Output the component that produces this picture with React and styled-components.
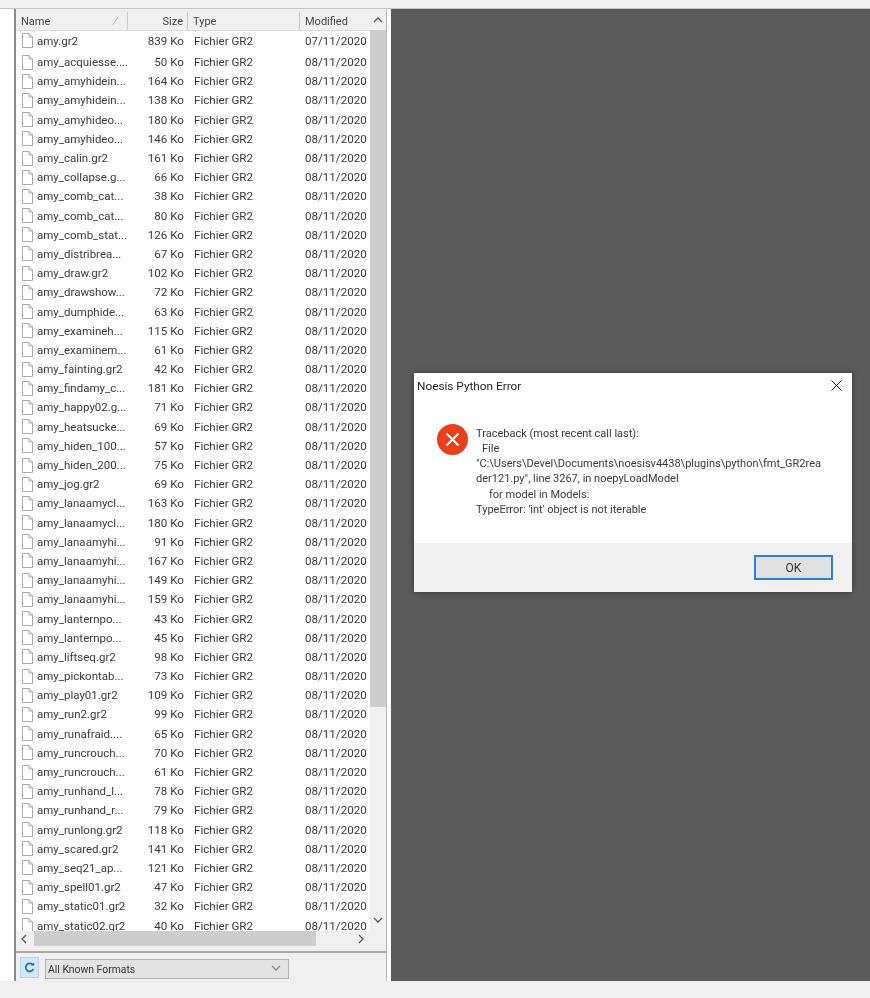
import React from 'react'
import styled, { createGlobalStyle } from 'styled-components'

const Global = createGlobalStyle`
  html, body { margin: 0; padding: 0; background: #f0f0f0; }
  body { font-family: Roboto, "Open Sans", "Liberation Sans", sans-serif; font-size: 12px; color: #3a3a3a; }
`

const Screen = styled.div`
  position: relative;
  width: 870px;
  height: 998px;
  overflow: hidden;
  display: flex;
  flex-direction: column;
  background: #f0f0f0;
  filter: blur(0.3px);
`
const TopStrip = styled.div`
  height: 8px;
  flex: none;
  background: #f0f0f0;
  border-bottom: 1px solid #c4c4c4;
`
const Middle = styled.div`
  height: 972px;
  flex: none;
  display: flex;
  background: #fff;
`
const BottomStrip = styled.div`
  flex: 1;
  background: #f0f0f0;
`
const Gutter = styled.div`
  width: 14px;
  flex: none;
  background: #fff;
`
const BrowserPanel = styled.div`
  width: 370px;
  height: 969px;
  flex: none;
  display: flex;
  flex-direction: column;
  padding-top: 3px;
  background: #f0f0f0;
  border-left: 2px solid #8a8a8a;
  border-right: 1px solid #b8b8b8;
`
const Desktop = styled.div`
  flex: 1;
  margin-left: 4px;
  background: #5b5b5b;
`
const ListArea = styled.div`
  height: 934px;
  flex: none;
  display: grid;
  grid-template-columns: 1fr 16px;
  grid-template-rows: 919px 15px;
`
const ListColumn = styled.div`
  display: flex;
  flex-direction: column;
  overflow: hidden;
  background: #fff;
  min-width: 0;
`
const Header = styled.div`
  height: 18px;
  flex: none;
  display: grid;
  grid-template-columns: 112px 60px 112px 1fr;
  background: #f0f0f0;
  border-bottom: 1px solid #dcdcdc;
  font-size: 11px;
`
const HeaderCell = styled.div`
  position: relative;
  display: flex;
  align-items: center;
  justify-content: ${p => (p.$right ? 'flex-end' : 'flex-start')};
  padding: ${p => p.$pad};
  padding-top: 2px;
  border-right: ${p => (p.$last ? 'none' : '1px solid #c9c9c9')};
  color: #444;
  line-height: 16px;
`
const SortMark = styled.svg`
  position: absolute;
  right: 7px;
  top: 4px;
`
const Rows = styled.div`
  flex: 1;
  overflow: hidden;
`
const Row = styled.div`
  height: ${p => (p.$first ? '21.5px' : '19.2px')};
  padding-bottom: ${p => (p.$first ? '2px' : '0')};
  box-sizing: border-box;
  display: grid;
  grid-template-columns: 112px 60px 112px 1fr;
  align-items: center;
  white-space: nowrap;
  line-height: 16px;
  font-size: 11.6px;
`
const NameCell = styled.div`
  display: flex;
  align-items: center;
  gap: 4px;
  padding-left: 5px;
  font-size: 11.5px;
`
const SizeCell = styled.div`
  text-align: right;
  padding-right: 4px;
`
const TypeCell = styled.div`
  padding-left: 6px;
`
const DateCell = styled.div`
  padding-left: 5px;
`
const VScroll = styled.div`
  display: flex;
  flex-direction: column;
  background: #f0f0f0;
`
const VThumb = styled.div`
  height: 677px;
  flex: none;
  background: #cdcdcd;
`
const ArrowBox = styled.div`
  height: ${p => p.$h || 18}px;
  width: ${p => p.$w || 16}px;
  flex: none;
  display: flex;
  align-items: center;
  justify-content: center;
`
const VTrack = styled.div`
  flex: 1;
`
const HScroll = styled.div`
  display: flex;
  background: #f0f0f0;
`
const HThumb = styled.div`
  width: 282px;
  flex: none;
  background: #cdcdcd;
`
const Corner = styled.div`
  background: #f0f0f0;
`
const Divider = styled.div`
  height: 2px;
  flex: none;
  background: #a8a8a8;
  margin-top: 5px;
`
const Toolbar = styled.div`
  flex: 1;
  display: flex;
  align-items: flex-start;
  gap: 6px;
  padding: 4px 0 0 4px;
`
const RefreshButton = styled.div`
  width: 17px;
  height: 19px;
  display: flex;
  align-items: center;
  justify-content: center;
  background: #d5e7f6;
  border: 1px solid #b9d2e6;
`
const FormatSelect = styled.div`
  width: 233px;
  height: 18px;
  margin-top: 2px;
  display: flex;
  align-items: center;
  justify-content: space-between;
  padding: 0 7px 0 2px;
  background: #e3e3e3;
  border: 1px solid #b4b4b4;
  font-size: 10.4px;
  color: #333;
`
const Dialog = styled.div`
  position: absolute;
  left: 414px;
  top: 373px;
  width: 438px;
  height: 219px;
  display: flex;
  flex-direction: column;
  background: #fff;
  box-shadow: 0 0 6px rgba(0, 0, 0, 0.45);
`
const TitleBar = styled.div`
  height: 25px;
  flex: none;
  display: flex;
  align-items: center;
  justify-content: space-between;
  padding: 0 10px 0 3px;
  color: #222;
  font-size: 11.8px;
`
const Body = styled.div`
  flex: 1;
  display: flex;
  gap: 8px;
  padding: 26px 0 0 23px;
`
const MessageText = styled.div`
  width: 350px;
  padding-top: 1.5px;
  font-size: 11px;
`
const MessageLine = styled.div`
  line-height: 15.3px;
  padding-left: ${p => p.$indent || 0}px;
  white-space: pre;
`
const Footer = styled.div`
  height: 49px;
  flex: none;
  display: flex;
  justify-content: flex-end;
  padding: 12px 19px 0 0;
  box-sizing: border-box;
  background: #f0f0f0;
`
const OkButton = styled.div`
  width: 75px;
  height: 21px;
  display: flex;
  align-items: center;
  justify-content: center;
  background: #e1e1e1;
  border: 2px solid #2f80c8;
  color: #333;
`

const files = [
  ['amy.gr2', '839 Ko', '07/11/2020'],
  ['amy_acquiesse....', '50 Ko'],
  ['amy_amyhidein...', '164 Ko'],
  ['amy_amyhidein...', '138 Ko'],
  ['amy_amyhideo...', '180 Ko'],
  ['amy_amyhideo...', '146 Ko'],
  ['amy_calin.gr2', '161 Ko'],
  ['amy_collapse.g...', '66 Ko'],
  ['amy_comb_cat...', '38 Ko'],
  ['amy_comb_cat...', '80 Ko'],
  ['amy_comb_stat...', '126 Ko'],
  ['amy_distribrea...', '67 Ko'],
  ['amy_draw.gr2', '102 Ko'],
  ['amy_drawshow...', '72 Ko'],
  ['amy_dumphide...', '63 Ko'],
  ['amy_examineh...', '115 Ko'],
  ['amy_examinem...', '61 Ko'],
  ['amy_fainting.gr2', '42 Ko'],
  ['amy_findamy_c...', '181 Ko'],
  ['amy_happy02.g...', '71 Ko'],
  ['amy_heatsucke...', '69 Ko'],
  ['amy_hiden_100...', '57 Ko'],
  ['amy_hiden_200...', '75 Ko'],
  ['amy_jog.gr2', '69 Ko'],
  ['amy_lanaamycl...', '163 Ko'],
  ['amy_lanaamycl...', '180 Ko'],
  ['amy_lanaamyhi...', '91 Ko'],
  ['amy_lanaamyhi...', '167 Ko'],
  ['amy_lanaamyhi...', '149 Ko'],
  ['amy_lanaamyhi...', '159 Ko'],
  ['amy_lanternpo...', '43 Ko'],
  ['amy_lanternpo...', '45 Ko'],
  ['amy_liftseq.gr2', '98 Ko'],
  ['amy_pickontab...', '73 Ko'],
  ['amy_play01.gr2', '109 Ko'],
  ['amy_run2.gr2', '99 Ko'],
  ['amy_runafraid....', '65 Ko'],
  ['amy_runcrouch...', '70 Ko'],
  ['amy_runcrouch...', '61 Ko'],
  ['amy_runhand_l...', '78 Ko'],
  ['amy_runhand_r...', '79 Ko'],
  ['amy_runlong.gr2', '118 Ko'],
  ['amy_scared.gr2', '141 Ko'],
  ['amy_seq21_ap...', '121 Ko'],
  ['amy_spell01.gr2', '47 Ko'],
  ['amy_static01.gr2', '32 Ko'],
  ['amy_static02.gr2', '40 Ko'],
]

const FileIcon = () => (
  <svg width="12" height="15" viewBox="0 0 12 15" style={{ flex: 'none' }}>
    <path d="M1.5 0.5H8L11.5 4V14.5H1.5Z M8 0.5V4H11.5" fill="#fff" stroke="#a9a9a9" strokeWidth="1" />
  </svg>
)

const Chevron = ({ dir, color = '#5a5a5a' }) => {
  const paths = {
    up: 'M1 6L5 2L9 6',
    down: 'M1 2L5 6L9 2',
    left: 'M6 1L2 5L6 9',
    right: 'M2 1L6 5L2 9',
  }
  return (
    <svg width="10" height="10" viewBox="0 0 10 10">
      <path d={paths[dir]} fill="none" stroke={color} strokeWidth="1.3" />
    </svg>
  )
}

export default function App() {
  return (
    <Screen>
      <Global />
      <TopStrip />
      <Middle>
        <Gutter />
        <BrowserPanel>
          <ListArea>
            <ListColumn>
              <Header>
                <HeaderCell $pad="0 0 0 5px">
                  Name
                  <SortMark width="8" height="10" viewBox="0 0 8 10">
                    <path d="M1 9L6 1" stroke="#b5b5b5" strokeWidth="1" fill="none" />
                  </SortMark>
                </HeaderCell>
                <HeaderCell $right $pad="0 4px 0 0">Size</HeaderCell>
                <HeaderCell $pad="0 0 0 5px">Type</HeaderCell>
                <HeaderCell $last $pad="0 0 0 5px">Modified</HeaderCell>
              </Header>
              <Rows>
                {files.map(([name, size, date], i) => (
                  <Row key={i} $first={i === 0}>
                    <NameCell>
                      <FileIcon />
                      {name}
                    </NameCell>
                    <SizeCell>{size}</SizeCell>
                    <TypeCell>Fichier GR2</TypeCell>
                    <DateCell>{date || '08/11/2020'}</DateCell>
                  </Row>
                ))}
              </Rows>
            </ListColumn>
            <VScroll>
              <ArrowBox><Chevron dir="up" /></ArrowBox>
              <VThumb />
              <VTrack />
              <ArrowBox $h={20}><Chevron dir="down" /></ArrowBox>
            </VScroll>
            <HScroll>
              <ArrowBox $w={18} $h={15}><Chevron dir="left" /></ArrowBox>
              <HThumb />
              <VTrack />
              <ArrowBox $w={17} $h={15}><Chevron dir="right" /></ArrowBox>
            </HScroll>
            <Corner />
          </ListArea>
          <Divider />
          <Toolbar>
            <RefreshButton>
              <svg width="11" height="11" viewBox="0 0 11 11">
                <path d="M9 3A4 4 0 1 0 9.4 7" fill="none" stroke="#1f6fc0" strokeWidth="1.8" />
                <path d="M6.5 3.6H10.2V0.4Z" fill="#1f6fc0" />
              </svg>
            </RefreshButton>
            <FormatSelect>
              All Known Formats
              <Chevron dir="down" color="#8a8a8a" />
            </FormatSelect>
          </Toolbar>
        </BrowserPanel>
        <Desktop />
      </Middle>
      <BottomStrip />
      <Dialog>
        <TitleBar>
          Noesis Python Error
          <svg width="11" height="11" viewBox="0 0 11 11">
            <path d="M0.5 0.5L10.5 10.5M10.5 0.5L0.5 10.5" stroke="#222" strokeWidth="1" />
          </svg>
        </TitleBar>
        <Body>
          <svg width="31" height="31" viewBox="0 0 31 31" style={{ flex: 'none' }}>
            <circle cx="15.5" cy="15.5" r="15.5" fill="#e8401c" />
            <path d="M9.5 9.5L21.5 21.5M21.5 9.5L9.5 21.5" stroke="#fff" strokeWidth="2" />
          </svg>
          <MessageText>
            <MessageLine>Traceback (most recent call last):</MessageLine>
            <MessageLine $indent={6}>File</MessageLine>
            <MessageLine>"C:\Users\Devel\Documents\noesisv4438\plugins\python\fmt_GR2rea</MessageLine>
            <MessageLine>der121.py", line 3267, in noepyLoadModel</MessageLine>
            <MessageLine $indent={13}>for model in Models:</MessageLine>
            <MessageLine>TypeError: 'int' object is not iterable</MessageLine>
          </MessageText>
        </Body>
        <Footer>
          <OkButton>OK</OkButton>
        </Footer>
      </Dialog>
    </Screen>
  )
}
